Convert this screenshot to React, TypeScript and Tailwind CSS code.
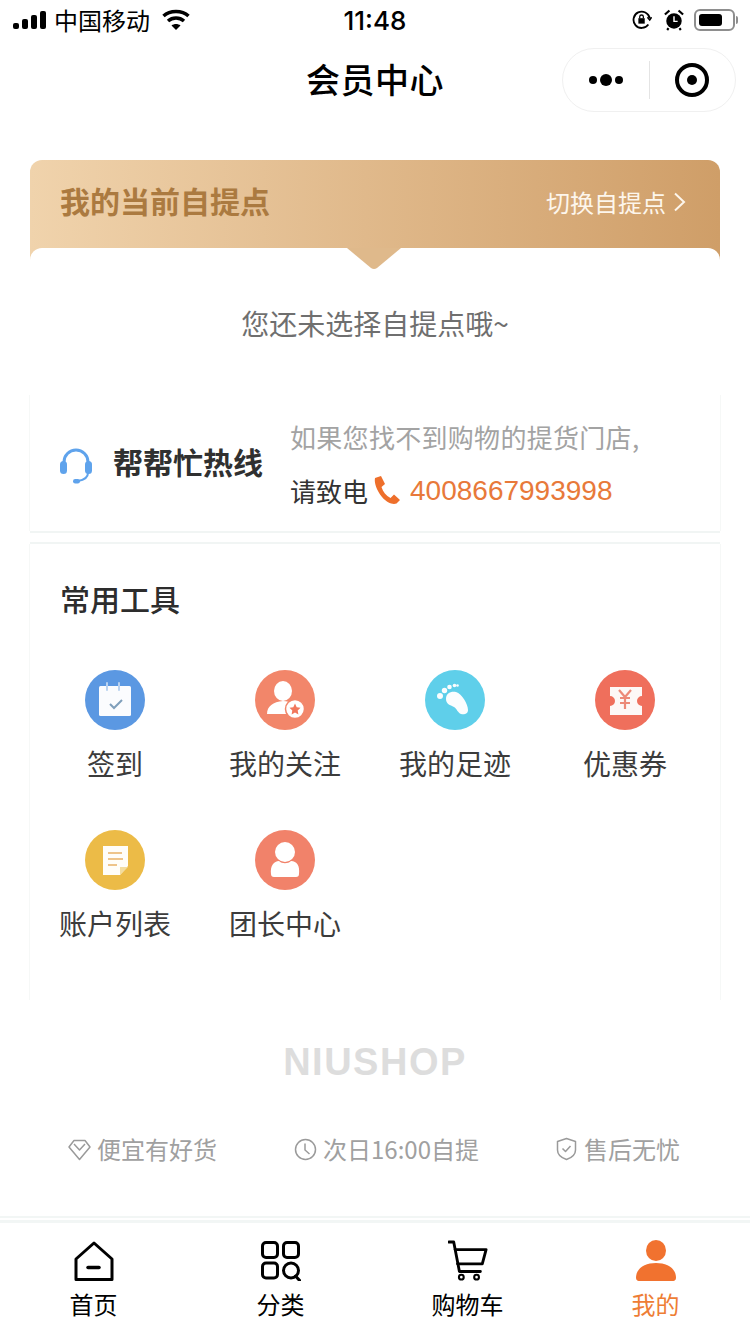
import React from 'react';

const cjk = "font-['Noto_Sans_CJK_SC','Noto_Sans',sans-serif]";

const HomeIcon = () => (
  <svg width="40" height="40" viewBox="0 0 40 40" fill="none" stroke="#000" strokeWidth="3" strokeLinejoin="round">
    <path d="M20 2 L38 18 V38.500 H2 V18 Z" />
    <path d="M14 26.500 H25" strokeWidth="3.500" strokeLinecap="round" />
  </svg>
);

const CategoryIcon = () => (
  <svg width="40" height="40" viewBox="0 0 40 40" fill="none" stroke="#000" strokeWidth="3">
    <rect x="1.500" y="1.500" width="15" height="15" rx="3.500" />
    <rect x="22.500" y="1.500" width="15" height="15" rx="3.500" />
    <rect x="1.500" y="22" width="15" height="15" rx="3.500" />
    <circle cx="30" cy="29.500" r="7.500" />
    <path d="M34.500 35 L39 40" strokeLinecap="round" />
  </svg>
);

const CartIcon = () => (
  <svg width="40" height="42" viewBox="0 0 42 42" fill="none" stroke="#000" strokeWidth="3" strokeLinejoin="round" strokeLinecap="round">
    <path d="M1 1 H6 L12 32 H34" />
    <path d="M7.500 9 H40 L36 24 H10" />
    <circle cx="14" cy="38" r="2.500" strokeWidth="2.200" />
    <circle cx="30" cy="38" r="2.500" strokeWidth="2.200" />
  </svg>
);

const MineIcon = () => (
  <svg width="42" height="42" viewBox="0 0 42 42" fill="#f1722f">
    <ellipse cx="21" cy="10.500" rx="10" ry="10.500" />
    <path d="M1 38 C1 28 10 23 21 23 C32 23 41 28 41 38 C41 40.500 39 41 37 41 H5 C3 41 1 40.500 1 38 Z" />
  </svg>
);

const CalendarIcon = () => (
  <svg width="60" height="60" viewBox="0 0 60 60">
    <circle cx="30" cy="30" r="30" fill="#5b98e2" />
    <rect x="14" y="16" width="32" height="30" rx="1.500" fill="#fbfcfe" />
    <path d="M22 13 V20 M34 13 V20" stroke="#b9d2f0" strokeWidth="2" strokeLinecap="round" />
    <path d="M25 34 L29 38 L37 30" fill="none" stroke="#7f9fbb" strokeWidth="2" />
  </svg>
);

const FollowIcon = () => (
  <svg width="60" height="60" viewBox="0 0 60 60">
    <circle cx="30" cy="30" r="30" fill="#f2866a" />
    <ellipse cx="28" cy="21" rx="9" ry="10" fill="#fff" />
    <path d="M12 44 C12 36 18 32 28 31 C36 31 40 34 40 44 Z" fill="#fff" />
    <circle cx="40" cy="39" r="9.500" fill="#fff" stroke="#f2866a" strokeWidth="1.500" />
    <path d="M40 33.500 L41.700 37.300 L45.500 37.800 L42.700 40.500 L43.400 44.500 L40 42.500 L36.600 44.500 L37.300 40.500 L34.500 37.800 L38.300 37.300 Z" fill="#f2775c" />
  </svg>
);

const FootIcon = () => (
  <svg width="60" height="60" viewBox="0 0 60 60">
    <circle cx="30" cy="30" r="30" fill="#5fcfea" />
    <path d="M21 29 C21 23 26 21 31 22 C37 24 43 34 43 40 C43 44 39 45 36 44 C33 43 32 39 29 37 C25 35 21 34 21 29 Z" fill="#fbfdfe" />
    <circle cx="15" cy="26" r="3" fill="#fbfdfe" />
    <circle cx="19.500" cy="20.500" r="2.700" fill="#fbfdfe" />
    <circle cx="24.500" cy="17" r="2.300" fill="#fbfdfe" />
    <circle cx="29.500" cy="15.500" r="1.800" fill="#fbfdfe" />
    <circle cx="32.500" cy="15.500" r="1.300" fill="#fbfdfe" />
  </svg>
);

const CouponIcon = () => (
  <svg width="60" height="60" viewBox="0 0 60 60">
    <circle cx="30" cy="30" r="30" fill="#ef6f5c" />
    <path d="M15 17 H47 V26 A4 4 0 0 0 47 36 V45 H15 V36 A5 5 0 0 0 15 26 Z" fill="#fdf8f6" />
    <path d="M24 20 L30 27 L36 20 M30 27 V39 M25 28 H35 M25 33 H35" fill="none" stroke="#ec8a78" strokeWidth="2.200" />
  </svg>
);

const NoteIcon = () => (
  <svg width="60" height="60" viewBox="0 0 60 60">
    <circle cx="30" cy="30" r="30" fill="#ecbb47" />
    <path d="M18 16 H43 V36 L35 45 H18 Z" fill="#fffdf8" />
    <path d="M23 23 H37 M23 29 H38 M23 35 H32" stroke="#eec48a" strokeWidth="1.800" />
    <path d="M35 45 V37 H43 Z" fill="#f3dc9e" />
  </svg>
);

const LeaderIcon = () => (
  <svg width="60" height="60" viewBox="0 0 60 60">
    <circle cx="30" cy="30" r="30" fill="#f1826a" />
    <circle cx="30" cy="22" r="10" fill="#fff" />
    <path d="M16 44 C15 36 19 31 24 31 C27 34 33 34 36 31 C42 31 45 36 44 44 C44 46 43 47 41 47 H19 C17 47 16 46 16 44 Z" fill="#fff" />
  </svg>
);

const tools = [
  { name: '签到', icon: <CalendarIcon /> },
  { name: '我的关注', icon: <FollowIcon /> },
  { name: '我的足迹', icon: <FootIcon /> },
  { name: '优惠券', icon: <CouponIcon /> },
  { name: '账户列表', icon: <NoteIcon /> },
  { name: '团长中心', icon: <LeaderIcon /> },
];

const tabs = [
  { name: '首页', icon: <HomeIcon />, width: 'w-[187px]' },
  { name: '分类', icon: <CategoryIcon />, width: 'w-[187px]' },
  { name: '购物车', icon: <CartIcon />, width: 'w-[187px]' },
  { name: '我的', icon: <MineIcon />, width: 'w-[189px]', active: true },
];

export default function App() {
  return (
    <div className={`w-[750px] h-[1334px] bg-white flex flex-col overflow-hidden ${cjk}`}>

      {/* STATUS BAR */}
      <div className="h-[40px] grid grid-cols-3 items-center pl-[13px] pr-[12px] text-black">
        <div className="flex items-center">
          <svg width="34" height="18" viewBox="0 0 34 18" fill="#000">
            <rect x="0" y="12" width="6" height="6" rx="2" />
            <rect x="9" y="8" width="6" height="10" rx="2" />
            <rect x="18" y="4" width="6" height="14" rx="2" />
            <rect x="27" y="0" width="6" height="18" rx="2" />
          </svg>
          <span className="ml-[7px] text-[24px] leading-none">中国移动</span>
          <svg className="ml-[12px]" width="28" height="22" viewBox="0 0 28 22" fill="none" stroke="#000" strokeWidth="3.500">
            <path d="M1.500 7 C8 1 20 1 26.500 7" />
            <path d="M6 12 C10.500 8 17.500 8 22 12" />
            <path d="M14 21 L9.500 16.500 C12 14.500 16 14.500 18.500 16.500 Z" fill="#000" stroke="none" />
          </svg>
        </div>
        <div className="text-center text-[26px] font-medium leading-none font-['Inter',sans-serif] pr-[1px] pt-[1px]">11:48</div>
        <div className="flex items-center justify-end">
          <svg width="20" height="20" viewBox="0 0 22 22" fill="none" stroke="#000" strokeWidth="2">
            <path d="M18 16 A9 9 0 1 1 19.500 9" />
            <path d="M17 8 L19.500 11 L21.500 8" strokeWidth="1.800" />
            <rect x="7" y="9" width="7" height="6" fill="#000" stroke="none" />
            <path d="M8.500 9 V7.500 A2 2 0 0 1 12.500 7.500 V9" strokeWidth="1.400" />
          </svg>
          <svg className="ml-[12px]" width="20" height="22" viewBox="0 0 22 24">
            <circle cx="11" cy="13" r="8.500" fill="#000" />
            <path d="M11 8 V13.500 H15" fill="none" stroke="#fff" strokeWidth="1.600" />
            <path d="M1 6 L6 1.500 M21 6 L16 1.500 M5 21 L3.500 23 M17 21 L18.500 23" stroke="#000" strokeWidth="2.400" />
          </svg>
          <div className="ml-[10px] w-[41px] h-[22px] rounded-[6px] border-2 border-[#8e8e8e] p-[3px]">
            <div className="w-[23px] h-full rounded-[3px] bg-black" />
          </div>
          <div className="ml-[1px] w-[2px] h-[8px] rounded-r-sm bg-[#8e8e8e]" />
        </div>
      </div>

      {/* NAV BAR */}
      <div className="h-[80px] grid grid-cols-[1fr_auto_1fr] items-center">
        <div />
        <h1 className="mb-[3px] text-[34px] leading-none font-medium tracking-[0.5px] text-black">会员中心</h1>
        <div className="flex justify-end pr-[14px]">
          <div className="w-[174px] h-[64px] rounded-full border border-[#f0f0f0] flex items-center">
            <div className="w-[86px] flex justify-center items-center gap-[3px]">
              <span className="w-[8px] h-[8px] rounded-full bg-black" />
              <span className="w-[12px] h-[12px] rounded-full bg-black" />
              <span className="w-[8px] h-[8px] rounded-full bg-black" />
            </div>
            <div className="w-px h-[38px] bg-[#e4e4e4]" />
            <div className="flex-1 flex justify-center pr-[2px]">
              <div className="w-[34px] h-[34px] rounded-full border-[4px] border-black flex items-center justify-center">
                <div className="w-[10px] h-[10px] rounded-full bg-black" />
              </div>
            </div>
          </div>
        </div>
      </div>

      <main className="flex-1 pt-[40px]">
        {/* PICKUP POINT */}
        <section className="mx-[30px] h-[220px] border-b border-[#f6f8f7]">
          <div className="relative h-[100px] rounded-t-[12px] bg-gradient-to-r from-[#f0d3ac] to-[#cf9e68] flex justify-between pt-[21px] pl-[30px] pr-[34px]">
            <span className="text-[30px] leading-[38px] font-bold text-[#ab7a40]">我的当前自提点</span>
            <span className="mt-[2px] flex items-center h-[38px] text-[24px] text-[#fdf6ec]">
              切换自提点
              <svg className="ml-[7px]" width="13" height="20" viewBox="0 0 13 20" fill="none" stroke="#fdf6ec" strokeWidth="2">
                <path d="M2 1.500 L11 10 L2 18.500" />
              </svg>
            </span>
          </div>
          <div className="relative -mt-[12px] h-[132px] rounded-t-[12px] bg-white flex justify-center pt-[56px]">
            <svg className="absolute top-0 left-[317px]" width="54" height="22" viewBox="0 0 54 22">
              <path d="M0 0 H54 L30 20 Q27 22 24 20 Z" fill="#dfb98b" />
            </svg>
            <span className="text-[28px] leading-[38px] text-[#6f6f6f]">您还未选择自提点哦~</span>
          </div>
        </section>

        {/* HOTLINE */}
        <section className="mx-[29px] mt-[15px] h-[136px] border-x border-[#f6f8f7] flex items-start">
          <svg className="ml-[30px] mt-[53px]" width="32" height="36" viewBox="0 0 32 36" fill="none">
            <path d="M4 18 V14 A12 12 0 0 1 28 14 V18" stroke="#5fa3ec" strokeWidth="3" />
            <rect x="0" y="13" width="7" height="13" rx="3.500" fill="#5fa3ec" />
            <rect x="25" y="13" width="7" height="13" rx="3.500" fill="#5fa3ec" />
            <path d="M28 25 C28 30 24 32 18 33" stroke="#5fa3ec" strokeWidth="2" />
            <rect x="13" y="31" width="7" height="4.500" rx="2.200" fill="#5fa3ec" />
          </svg>
          <h2 className="ml-[21px] mt-[46px] text-[30px] leading-[40px] font-bold text-[#303030] whitespace-nowrap">帮帮忙热线</h2>
          <div className="ml-[27px] pt-[20px]">
            <p className="text-[26px] leading-[44px] tracking-[0.3px] text-[#a3a3a3] whitespace-nowrap">如果您找不到购物的提货门店,</p>
            <p className="mt-[9px] flex items-center h-[44px] text-[26px] text-[#333] whitespace-nowrap">
              请致电
              <svg className="ml-[5px]" width="28" height="30" viewBox="0 0 28 30">
                <path d="M2 3 L8 1 L12 9 L8.500 12 C10 17 13 20.500 17.500 23 L21 19.500 L27 25 L23.500 28.500 C20 30 14 28 9 22 C3.500 15 1 8 2 3 Z" fill="#ee6f2b" />
              </svg>
              <span className="ml-[9px] pt-[2px] text-[28px] font-['Liberation_Sans',sans-serif] text-[#e8793a]">4008667993998</span>
            </p>
          </div>
        </section>

        <div className="mx-[30px] h-[13px] border-y-2 border-[#f1f5f4]" />

        {/* COMMON TOOLS */}
        <section className="mx-[29px] h-[456px] border-x border-[#f6f8f7]">
          <h2 className="pl-[30px] pt-[33px] text-[30px] leading-[42px] font-medium text-[#2d2d2d]">常用工具</h2>
          <div className="mt-[51px] grid grid-cols-[repeat(4,170px)] auto-rows-[160px]">
            {tools.map((tool) => (
              <div key={tool.name} className="flex flex-col items-center">
                {tool.icon}
                <span className="mt-[13px] text-[28px] leading-[40px] text-[#3c3c3c] whitespace-nowrap">{tool.name}</span>
              </div>
            ))}
          </div>
        </section>

        {/* FOOTER LOGO */}
        <div className="mt-[40px] text-center text-[38px] leading-[44px] font-bold tracking-[1.500px] text-[#dddddd] font-['Liberation_Sans',sans-serif]">NIUSHOP</div>

        {/* PROMISES */}
        <div className="mt-[45px] h-[40px] pl-[68px] pr-[70px] flex justify-between items-center text-[24px] text-[#a0a0a0]">
          <span className="flex items-center gap-[6px]">
            <svg width="23" height="23" viewBox="0 0 23 23" fill="none" stroke="#9a9a9a" strokeWidth="1.500" strokeLinejoin="round">
              <path d="M6 2.500 H17 L22 9 L11.500 21.500 L1 9 Z" />
              <path d="M6 6 L11.500 12 L17 6" />
            </svg>
            便宜有好货
          </span>
          <span className="flex items-center gap-[6px]">
            <svg width="23" height="23" viewBox="0 0 23 23" fill="none" stroke="#9a9a9a" strokeWidth="1.500">
              <circle cx="11.500" cy="11.500" r="10" />
              <path d="M11 5.500 V12 L15.500 16" />
            </svg>
            次日16:00自提
          </span>
          <span className="flex items-center gap-[7px]">
            <svg width="21" height="24" viewBox="0 0 21 24" fill="none" stroke="#9a9a9a" strokeWidth="1.500" strokeLinejoin="round">
              <path d="M10.500 1.500 L19.500 4.500 V13 C19.500 18 15 21 10.500 22.500 C6 21 1.500 18 1.500 13 V4.500 Z" />
              <path d="M6.500 11.500 L9.500 14.500 L14.500 9" />
            </svg>
            售后无忧
          </span>
        </div>
      </main>

      {/* TAB BAR */}
      <nav className="h-[118px] border-t-2 border-[#f2f6f5] bg-white flex flex-col">
        <div className="mt-[2px] h-[3px] bg-[#f2f6f5]" />
        <div className="flex pt-[17px]">
          {tabs.map((tab) => (
            <div key={tab.name} className={`${tab.width} flex flex-col items-center`}>
              <div className="h-[42px] flex items-center justify-center">{tab.icon}</div>
              <span className={`mt-[7px] text-[24px] leading-[30px] ${tab.active ? 'text-[#ee7d34]' : 'text-black'}`}>{tab.name}</span>
            </div>
          ))}
        </div>
      </nav>
    </div>
  );
}
